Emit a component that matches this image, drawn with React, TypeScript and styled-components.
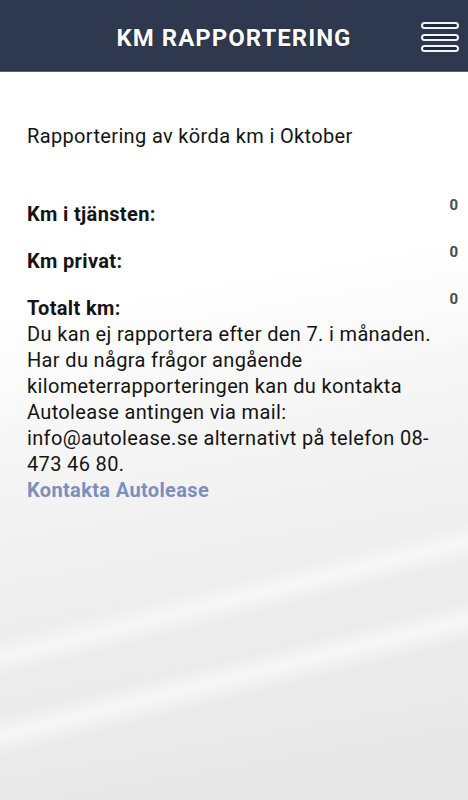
import React from "react";
import styled, { createGlobalStyle } from "styled-components";

const Global = createGlobalStyle`
  html, body { margin: 0; padding: 0; }
  body { font-family: Roboto, "Liberation Sans", Arial, sans-serif; background: #fff; }
`;

const Page = styled.div`
  min-height: 800px;
  display: flex;
  flex-direction: column;
  background:
    linear-gradient(166deg,
      rgba(255,255,255,0) 69.5%,
      rgba(255,255,255,0.55) 71.8%,
      rgba(255,255,255,0) 74%,
      rgba(255,255,255,0) 78%,
      rgba(255,255,255,0.6) 80.3%,
      rgba(255,255,255,0) 82.8%),
    linear-gradient(170deg, #ffffff 0%, #ffffff 36%, #f4f4f4 55%, #ececec 75%, #e7e7e7 100%);
`;

const Header = styled.header`
  height: 72px;
  padding-top: 5px;
  background: #2e394f;
  display: flex;
  align-items: center;
  justify-content: center;
  position: relative;
  border-bottom: 1px solid #59647a;
  box-sizing: border-box;
`;

const Title = styled.h1`
  margin: 0;
  color: #ffffff;
  font-family: Roboto, "Liberation Sans", Arial, sans-serif;
  font-weight: 700;
  font-size: 24px;
  letter-spacing: 1px;
  text-shadow: 0 0 1px rgba(0,0,0,0.7);
`;

const MenuButton = styled.button`
  position: absolute;
  right: 9px;
  top: 22px;
  width: 38px;
  height: 30px;
  padding: 0;
  border: none;
  background: transparent;
  display: flex;
  flex-direction: column;
  justify-content: space-between;
`;

const MenuBar = styled.span`
  display: block;
  height: 7px;
  box-sizing: border-box;
  border: 2px solid #f2f2f2;
  border-radius: 4px;
  background: #1f2a3e;
`;

const Content = styled.main`
  padding: 51px 10px 0 27px;
  color: #141414;
  font-size: 20px;
  line-height: 26px;
  letter-spacing: 0.35px;
`;

const Intro = styled.p`
  margin: 0 0 52px 0;
  font-weight: 400;
`;

const Row = styled.div<{ $last?: boolean }>`
  display: flex;
  justify-content: space-between;
  align-items: flex-start;
  margin-bottom: ${(p) => (p.$last ? "0" : "21px")};
`;

const Label = styled.span`
  font-weight: 700;
`;

const Value = styled.span`
  font-size: 15px;
  line-height: 15px;
  letter-spacing: 0;
  font-weight: 700;
  color: #4a4a4a;
  margin-top: -3px;
`;

const Info = styled.p`
  margin: 0;
`;

const Link = styled.a`
  display: block;
  color: #7a8fbd;
  font-weight: 700;
  text-decoration: none;
`;

export default function App() {
  return (
    <>
      <Global />
      <Page>
        <Header>
          <Title>KM RAPPORTERING</Title>
          <MenuButton aria-label="Meny">
            <MenuBar />
            <MenuBar />
            <MenuBar />
          </MenuButton>
        </Header>
        <Content>
          <Intro>Rapportering av körda km i Oktober</Intro>
          <Row>
            <Label>Km i tjänsten:</Label>
            <Value>0</Value>
          </Row>
          <Row>
            <Label>Km privat:</Label>
            <Value>0</Value>
          </Row>
          <Row $last>
            <Label>Totalt km:</Label>
            <Value>0</Value>
          </Row>
          <Info>
            Du kan ej rapportera efter den 7. i månaden. Har du några frågor angående
            kilometerrapporteringen kan du kontakta Autolease antingen via mail:
            info@autolease.se alternativt på telefon 08-473 46 80.
          </Info>
          <Link href="#">Kontakta Autolease</Link>
        </Content>
      </Page>
    </>
  );
}
